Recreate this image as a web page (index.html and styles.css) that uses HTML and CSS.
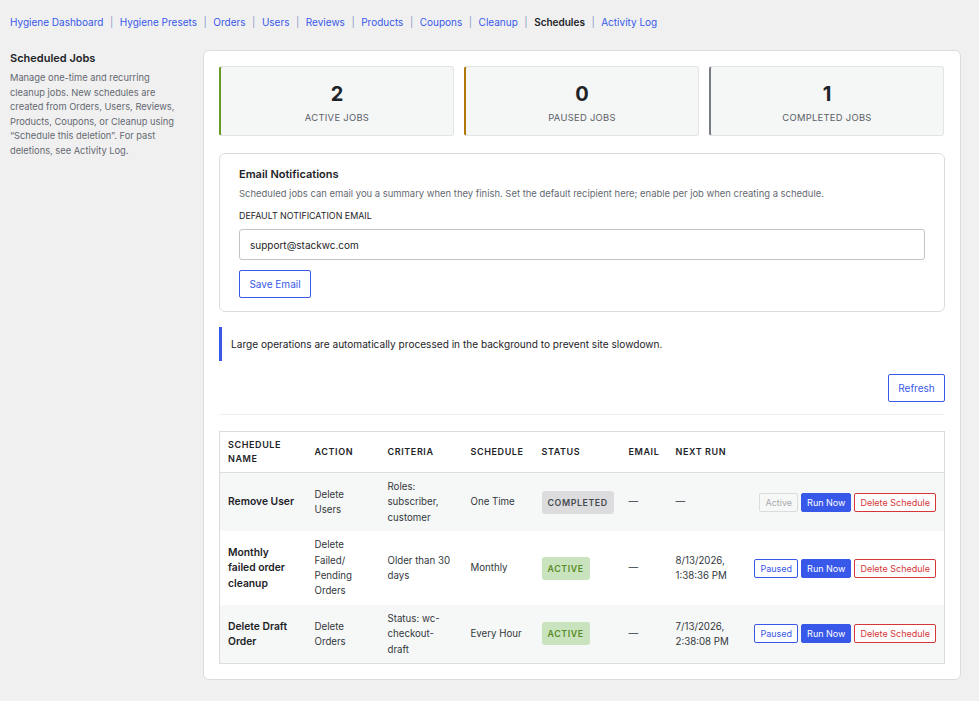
FILE: index.html
```html
<!DOCTYPE html>
<html lang="en">
	<head>
		<meta charset="UTF-8" />
		<meta name="viewport" content="width=device-width, initial-scale=1.0" />
		<title>Schedules</title>
		<link rel="stylesheet" href="styles.css">
	</head>
	<body>
		<div class="nav">
			<a href="#">Hygiene Dashboard</a><span class="sep">|</span>
			<a href="#">Hygiene Presets</a><span class="sep">|</span>
			<a href="#">Orders</a><span class="sep">|</span>
			<a href="#">Users</a><span class="sep">|</span>
			<a href="#">Reviews</a><span class="sep">|</span>
			<a href="#">Products</a><span class="sep">|</span>
			<a href="#">Coupons</a><span class="sep">|</span>
			<a href="#">Cleanup</a><span class="sep">|</span>
			<a href="#" class="current">Schedules</a><span class="sep">|</span>
			<a href="#">Activity Log</a>
		</div>
		<div class="layout">
			<div class="sidebar">
				<h2>Scheduled Jobs</h2>
				<p>Manage one-time and recurring cleanup jobs. New schedules are created from Orders, Users, Reviews, Products, Coupons, or Cleanup using “Schedule this deletion”. For past deletions, see Activity Log.</p>
			</div>
			<div class="main-card">
				<div class="stats">
					<div class="stat stat-active">
						<div class="stat-num">2</div>
						<div class="stat-label">Active Jobs</div>
					</div>
					<div class="stat stat-paused">
						<div class="stat-num">0</div>
						<div class="stat-label">Paused Jobs</div>
					</div>
					<div class="stat stat-completed">
						<div class="stat-num">1</div>
						<div class="stat-label">Completed Jobs</div>
					</div>
				</div>
				<div class="email-card">
					<h3>Email Notifications</h3>
					<p class="email-desc">Scheduled jobs can email you a summary when they finish. Set the default recipient here; enable per job when creating a schedule.</p>
					<label class="email-label" for="notify-email">Default Notification Email</label>
					<input type="text" id="notify-email" class="email-input" value="support@stackwc.com" />
					<button class="btn-outline btn-save">Save Email</button>
				</div>
				<div class="notice">Large operations are automatically processed in the background to prevent site slowdown.</div>
				<div class="toolbar">
					<button class="btn-outline btn-refresh">Refresh</button>
				</div>
				<hr class="divider" />
				<table class="jobs">
					<colgroup>
						<col style="width: 87px" />
						<col style="width: 73px" />
						<col style="width: 83px" />
						<col style="width: 71px" />
						<col style="width: 87px" />
						<col style="width: 47px" />
						<col style="width: 83px" />
						<col />
					</colgroup>
					<thead>
						<tr>
							<th>Schedule Name</th>
							<th>Action</th>
							<th>Criteria</th>
							<th>Schedule</th>
							<th>Status</th>
							<th>Email</th>
							<th>Next Run</th>
							<th></th>
						</tr>
					</thead>
					<tbody>
						<tr>
							<td class="name">Remove User</td>
							<td>Delete Users</td>
							<td>Roles: subscriber, customer</td>
							<td>One Time</td>
							<td><span class="badge badge-completed">Completed</span></td>
							<td>—</td>
							<td>—</td>
							<td>
								<div class="actions">
									<button class="btn-sm btn-disabled">Active</button>
									<button class="btn-sm btn-run">Run Now</button>
									<button class="btn-sm btn-delete">Delete Schedule</button>
								</div>
							</td>
						</tr>
						<tr>
							<td class="name">Monthly failed order cleanup</td>
							<td>Delete Failed/ Pending Orders</td>
							<td>Older than 30 days</td>
							<td>Monthly</td>
							<td><span class="badge badge-active">Active</span></td>
							<td>—</td>
							<td>8/13/2026, 1:38:36 PM</td>
							<td>
								<div class="actions">
									<button class="btn-sm btn-pause">Paused</button>
									<button class="btn-sm btn-run">Run Now</button>
									<button class="btn-sm btn-delete">Delete Schedule</button>
								</div>
							</td>
						</tr>
						<tr>
							<td class="name">Delete Draft Order</td>
							<td>Delete Orders</td>
							<td>Status: wc-checkout-draft</td>
							<td>Every Hour</td>
							<td><span class="badge badge-active">Active</span></td>
							<td>—</td>
							<td>7/13/2026, 2:38:08 PM</td>
							<td>
								<div class="actions">
									<button class="btn-sm btn-pause">Paused</button>
									<button class="btn-sm btn-run">Run Now</button>
									<button class="btn-sm btn-delete">Delete Schedule</button>
								</div>
							</td>
						</tr>
					</tbody>
				</table>
			</div>
		</div>
	</body>
</html>
```

FILE: styles.css
```css
* {
	margin: 0;
	padding: 0;
	box-sizing: border-box;
}
body {
	background-color: rgb(240, 240, 241);
	color: rgb(44, 51, 56);
	font-family: Inter, "Noto Sans", sans-serif;
	font-size: 10px;
}
.nav {
	display: flex;
	align-items: flex-start;
	padding: 15px 10px 0px 10px;
	height: 50px;
	font-size: 10px;
	line-height: 14px;
}
.nav > a {
	color: rgb(56, 88, 233);
	text-decoration: none;
}
.nav > a.current {
	color: rgb(29, 35, 39);
	font-weight: 600;
}
.nav > .sep {
	color: rgb(140, 155, 200);
	margin: 0px 6.5px;
}
.layout {
	display: grid;
	grid-template-columns: 175px 1fr;
	gap: 18px;
	padding: 0px 18px 20px 10px;
}
.sidebar > h2 {
	font-size: 11px;
	font-weight: 600;
	line-height: 16px;
	color: rgb(29, 35, 39);
}
.sidebar > p {
	margin-top: 5px;
	font-size: 9.3px;
	line-height: 14.5px;
	color: rgb(100, 105, 112);
}
.main-card {
	background-color: rgb(255, 255, 255);
	border: 1px solid rgb(220, 220, 222);
	border-radius: 6px;
	padding: 15px;
}
.stats {
	display: grid;
	grid-template-columns: 1fr 1fr 1fr;
	gap: 10px;
	padding-right: 1px;
}
.stat {
	height: 70px;
	background-color: rgb(245, 246, 246);
	border: 1px solid rgb(226, 228, 230);
	border-left-width: 2px;
	border-radius: 3px;
	text-align: center;
	padding-top: 15px;
}
.stat-active {
	border-left-color: rgb(104, 154, 38);
}
.stat-paused {
	border-left-color: rgb(176, 120, 12);
}
.stat-completed {
	border-left-color: rgb(120, 124, 130);
}
.stat-num {
	font-size: 20px;
	font-weight: 700;
	line-height: 24px;
	color: rgb(29, 35, 39);
}
.stat-label {
	margin-top: 6px;
	font-size: 9.4px;
	line-height: 12px;
	text-transform: uppercase;
	letter-spacing: 0.3px;
	color: rgb(90, 96, 102);
}
.email-card {
	margin-top: 17px;
	border: 1px solid rgb(220, 220, 222);
	border-radius: 6px;
	padding: 12px 19px 13px 19px;
}
.email-card > h3 {
	font-size: 11px;
	font-weight: 600;
	line-height: 16px;
	color: rgb(29, 35, 39);
}
.email-desc {
	margin-top: 5px;
	font-size: 9.45px;
	line-height: 14px;
	color: rgb(100, 105, 112);
}
.email-label {
	display: block;
	margin-top: 9px;
	font-size: 8.9px;
	line-height: 12px;
	text-transform: uppercase;
	color: rgb(29, 35, 39);
}
.email-input {
	display: block;
	margin-top: 7px;
	width: 100%;
	height: 31px;
	padding: 0px 10px;
	border: 1px solid rgb(195, 196, 199);
	border-radius: 3px;
	font-family: inherit;
	font-size: 10px;
	color: rgb(29, 35, 39);
}
.btn-outline {
	height: 28px;
	padding: 0px 9px;
	background-color: rgb(255, 255, 255);
	border: 1px solid rgb(56, 88, 233);
	border-radius: 2px;
	color: rgb(56, 88, 233);
	font-family: inherit;
	font-size: 10px;
	cursor: pointer;
}
.btn-save {
	margin-top: 10px;
	width: 72px;
}
.notice {
	margin-top: 15px;
	height: 34px;
	border-left: 3px solid rgb(56, 88, 233);
	padding-left: 9px;
	display: flex;
	align-items: center;
	font-size: 10.1px;
	color: rgb(29, 35, 39);
}
.toolbar {
	margin-top: 13px;
	display: flex;
	justify-content: flex-end;
}
.btn-refresh {
	width: 57px;
}
.divider {
	margin-top: 12px;
	border: none;
	border-top: 1px solid rgb(240, 240, 241);
}
.jobs {
	margin-top: 16px;
	width: 100%;
	table-layout: fixed;
	border-collapse: collapse;
	border: 1px solid rgb(220, 220, 222);
	font-size: 9.7px;
	line-height: 15.4px;
	color: rgb(50, 55, 60);
}
.jobs th {
	height: 41px;
	padding: 5px 8px;
	text-align: left;
	font-size: 9px;
	line-height: 14px;
	font-weight: 600;
	letter-spacing: 0.6px;
	text-transform: uppercase;
	color: rgb(29, 35, 39);
	border-bottom: 1px solid rgb(220, 220, 222);
}
.jobs td {
	padding: 6px 8px;
	vertical-align: middle;
}
.jobs tbody tr:nth-child(odd) {
	background-color: rgb(246, 247, 247);
}
.jobs td.name {
	padding-right: 12px;
	font-size: 10.3px;
	font-weight: 600;
	color: rgb(29, 35, 39);
}
.badge {
	display: inline-block;
	height: 23px;
	line-height: 23px;
	padding: 0px 6px;
	border-radius: 3px;
	font-size: 8.8px;
	font-weight: 600;
	letter-spacing: 0.6px;
	text-transform: uppercase;
}
.badge-completed {
	background-color: rgb(220, 220, 222);
	color: rgb(70, 75, 80);
}
.badge-active {
	background-color: rgb(200, 227, 190);
	color: rgb(90, 140, 40);
}
.actions {
	display: flex;
	justify-content: flex-end;
	gap: 3px;
}
.btn-sm {
	height: 19px;
	padding: 0px 5px;
	border: 1px solid;
	border-radius: 2px;
	background-color: rgb(255, 255, 255);
	font-family: inherit;
	font-size: 9px;
	white-space: nowrap;
	cursor: pointer;
}
.btn-disabled {
	border-color: rgb(220, 220, 222);
	background-color: rgb(246, 247, 247);
	color: rgb(167, 170, 173);
}
.btn-pause {
	border-color: rgb(56, 88, 233);
	color: rgb(56, 88, 233);
}
.btn-run {
	border-color: rgb(56, 88, 233);
	background-color: rgb(56, 88, 233);
	color: rgb(255, 255, 255);
}
.btn-delete {
	border-color: rgb(214, 54, 56);
	color: rgb(214, 54, 56);
}
```
